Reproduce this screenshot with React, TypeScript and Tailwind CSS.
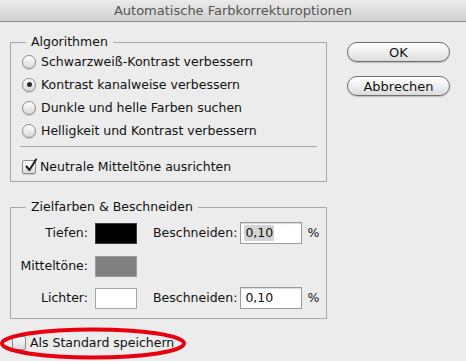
import React from 'react';

const Radio: React.FC<{ checked?: boolean; label: string }> = ({ checked, label }) => (
    <div className="flex items-center h-[23px] pl-[11px]">
        <div className="w-[14px] h-[14px] rounded-full border border-[#8c8c8c] bg-gradient-to-b from-[#ffffff] to-[#d9d9d9] shadow-[0_1px_1px_rgba(0,0,0,0.15)] flex items-center justify-center">
            {checked && <div className="w-[5px] h-[5px] rounded-full bg-[#2a2a2a]" />}
        </div>
        <span className="ml-[5px]">{label}</span>
    </div>
);

const Checkbox: React.FC<{ checked?: boolean }> = ({ checked }) => (
    <div className="relative w-[14px] h-[14px] rounded-[2px] border border-[#8c8c8c] bg-gradient-to-b from-[#ffffff] to-[#d9d9d9] shadow-[0_1px_1px_rgba(0,0,0,0.15)]">
        {checked && (
            <svg className="absolute left-[1px] top-[-3px]" width="14" height="15" viewBox="0 0 14 15">
                <path d="M2.5 8.5 L5.5 12 L12 1.5" fill="none" stroke="#1e1e1e" strokeWidth="2" strokeLinecap="round" strokeLinejoin="round" />
            </svg>
        )}
    </div>
);

const App: React.FC = () => {
    const radios = [
        'Schwarzweiß-Kontrast verbessern',
        'Kontrast kanalweise verbessern',
        'Dunkle und helle Farben suchen',
        'Helligkeit und Kontrast verbessern',
    ];

    return (
        <div className="relative w-[466px] h-[361px] overflow-hidden bg-[#ececec] text-[#111] text-[12.5px] leading-[16px] font-['DejaVu_Sans',sans-serif]">
            {/* Title bar */}
            <div className="h-[22px] border-b border-[#8e8e8e] bg-gradient-to-b from-[#ebebeb] to-[#d1d1d1] flex items-center justify-center text-[#555] text-[13px]">
                Automatische Farbkorrekturoptionen
            </div>

            <div className="flex pl-[10px]">
                {/* Left column */}
                <div className="w-[317px]">
                    <fieldset className="mt-[12px] border border-[#a9a9a9] pb-[3px]">
                        <legend className="ml-[15px] px-[5px]">Algorithmen</legend>
                        {radios.map((r, i) => (
                            <Radio key={i} label={r} checked={i === 1} />
                        ))}
                        <div className="mx-[9px] mt-[4px] h-px bg-[#a9a9a9]" />
                        <div className="flex items-center h-[23px] pl-[11px] mt-[8px]">
                            <Checkbox checked />
                            <span className="ml-[4px]">Neutrale Mitteltöne ausrichten</span>
                        </div>
                    </fieldset>

                    <fieldset className="mt-[17px] border border-[#a9a9a9] pb-[9px]">
                        <legend className="ml-[15px] px-[5px]">Zielfarben &amp; Beschneiden</legend>
                        <div className="flex items-center h-[22px] mt-[7px]">
                            <span className="w-[77px] text-right">Tiefen:</span>
                            <div className="ml-[7px] w-[42px] h-[21px] bg-black border border-[#3a3a3a]" />
                            <span className="ml-[16px]">Beschneiden:</span>
                            <div className="ml-[3px] w-[62px] h-[22px] bg-white border border-[#9a9a9a] shadow-[inset_0_1px_1px_rgba(0,0,0,0.15)] flex items-center pl-[3px]">
                                <span className="bg-[#d4d4d4] px-[1px]">0,10</span>
                            </div>
                            <span className="ml-[5px]">%</span>
                        </div>
                        <div className="flex items-center h-[22px] mt-[11px]">
                            <span className="w-[77px] text-right">Mitteltöne:</span>
                            <div className="ml-[7px] w-[42px] h-[21px] bg-[#808080] border border-[#9c9c9c]" />
                        </div>
                        <div className="flex items-center h-[22px] mt-[10px]">
                            <span className="w-[77px] text-right">Lichter:</span>
                            <div className="ml-[7px] w-[42px] h-[21px] bg-white border border-[#a4a4a4]" />
                            <span className="ml-[16px]">Beschneiden:</span>
                            <div className="ml-[3px] w-[62px] h-[22px] bg-white border border-[#9a9a9a] shadow-[inset_0_1px_1px_rgba(0,0,0,0.15)] flex items-center pl-[4px]">
                                0,10
                            </div>
                            <span className="ml-[5px]">%</span>
                        </div>
                    </fieldset>

                    <div className="flex items-center h-[23px] mt-[12px] pl-[2px]">
                        <Checkbox />
                        <span className="ml-[4px]">Als Standard speichern</span>
                    </div>
                </div>

                {/* Buttons */}
                <div className="ml-[20px] mt-[20px] flex flex-col gap-[14px]">
                    <button className="w-[103px] h-[20px] rounded-full border border-[#6f6f6f] bg-gradient-to-b from-[#ffffff] via-[#f0f0f0] to-[#dcdcdc] shadow-[0_1px_1px_rgba(0,0,0,0.2)] text-[13px] leading-none">
                        OK
                    </button>
                    <button className="w-[103px] h-[20px] rounded-full border border-[#6f6f6f] bg-gradient-to-b from-[#ffffff] via-[#f0f0f0] to-[#dcdcdc] shadow-[0_1px_1px_rgba(0,0,0,0.2)] text-[13px] leading-none">
                        Abbrechen
                    </button>
                </div>
            </div>

            {/* Red highlight ellipse */}
            <svg className="absolute left-0 top-[327px] pointer-events-none" width="190" height="34" viewBox="0 0 190 34">
                <ellipse cx="93" cy="16.5" rx="91" ry="14" fill="none" stroke="#e8000e" strokeWidth="4" />
            </svg>
        </div>
    );
};

export default App;
